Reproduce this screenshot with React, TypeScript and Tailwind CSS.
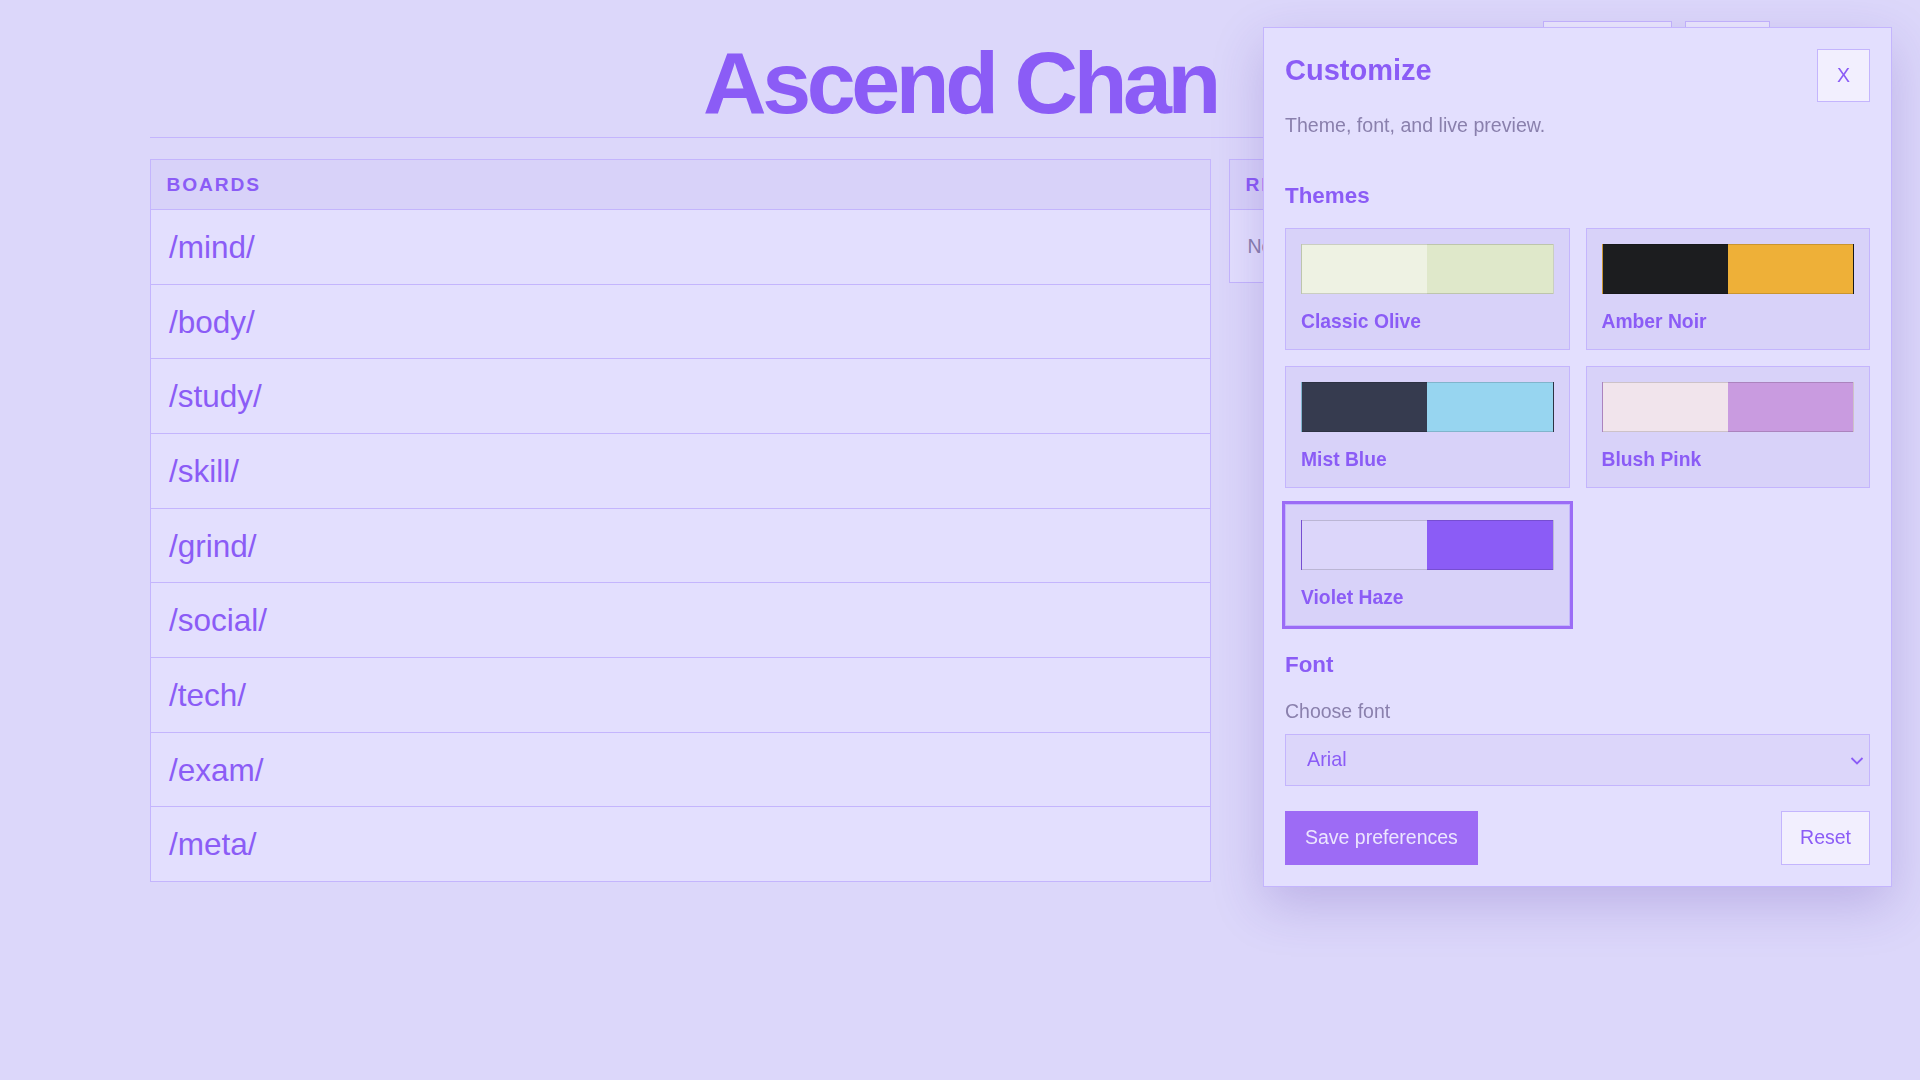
import React, { useState } from 'react';

const BOARDS = ['mind', 'body', 'study', 'skill', 'grind', 'social', 'tech', 'exam', 'meta'];

// swatch background repeats under the translucent border, like the original
const THEMES = [
  { id: 'olive', name: 'Classic Olive', swatch: 'bg-[linear-gradient(90deg,#eef2e3_50%,#dfe8ca_50%)]' },
  { id: 'amber', name: 'Amber Noir', swatch: 'bg-[linear-gradient(90deg,#1c1d1f_50%,#eeb038_50%)]' },
  { id: 'mist', name: 'Mist Blue', swatch: 'bg-[linear-gradient(90deg,#363b4f_50%,#97d5f0_50%)]' },
  { id: 'blush', name: 'Blush Pink', swatch: 'bg-[linear-gradient(90deg,#f1e4ec_50%,#c99be0_50%)]' },
  { id: 'violet', name: 'Violet Haze', swatch: 'bg-[linear-gradient(90deg,#dcd6fa_50%,#8b5cf6_50%)]' },
];

export default function App() {
  const [theme, setTheme] = useState('violet');
  const [font, setFont] = useState('Arial');

  return (
    <div className="min-h-screen bg-[#dcd7fa] text-[#8b5cf6] font-['Liberation_Sans',Arial,sans-serif]">
      <div className="w-[1620px] mx-auto">
        {/* Header */}
        <header className="relative pt-[32px] pb-[4px] border-b border-[#c4b5fd]">
          <h1 className="text-center text-[88px] leading-[101px] font-bold tracking-[-0.05em] text-[#8b5cf6]">
            Ascend Chan
          </h1>
          <nav className="absolute top-[21px] right-0 flex gap-[13px]">
            <button className="w-[129px] h-[48px] bg-[#ece8fe] border border-[#c4b5fd] text-[19.5px]">Customize</button>
            <button className="w-[85px] h-[48px] bg-[#ece8fe] border border-[#c4b5fd] text-[19.5px]">Login</button>
          </nav>
        </header>

        <div className="mt-[21px] grid grid-cols-[1061px_1fr] gap-[18px] items-start">
          {/* Boards */}
          <section className="border border-[#c4b5fd] bg-[#e3dffe]">
            <h2 className="bg-[#d8d2f9] px-[15.4px] pt-[10.8px] pb-[9.4px] leading-[28.8px] text-[19.2px] font-bold tracking-widest uppercase">
              Boards
            </h2>
            {BOARDS.map((b) => (
              <a
                key={b}
                href="#"
                className="block border-t border-[#c4b5fd] pl-[18px] py-[13.85px] leading-[46px] text-[31.5px] text-[#8b5cf6]"
              >
                /{b}/
              </a>
            ))}
          </section>

          {/* Recent */}
          <section className="border border-[#c4b5fd] bg-[#e3dffe]">
            <h2 className="bg-[#d8d2f9] px-[15.4px] pt-[10.8px] pb-[9.4px] leading-[28.8px] text-[19.2px] font-bold tracking-widest uppercase">
              Recent
            </h2>
            <p className="border-t border-[#c4b5fd] px-[17.5px] py-[21.6px] leading-[28.8px] text-[19.5px] text-[#8a80ad]">
              No threads yet.
            </p>
          </section>
        </div>
      </div>

      {/* Customize panel */}
      <aside className="fixed top-[27px] right-[28px] w-[629px] bg-[#e3dffe] border border-[#c4b5fd] p-[21px] shadow-[0_18px_48px_rgba(76,45,170,0.22)]">
        <div className="flex justify-between items-start">
          <div>
            <h2 className="text-[29px] leading-[42px] font-bold">Customize</h2>
            <p className="mt-[20px] text-[19.6px] leading-[28.8px] text-[#8a80ad]">Theme, font, and live preview.</p>
          </div>
          <button className="h-[53px] w-[53px] bg-[#f2effe] border border-[#c4b5fd] text-[19.6px] text-[#8b5cf6]">
            X
          </button>
        </div>

        <h3 className="mt-[39.4px] text-[22.4px] leading-[33.6px] font-bold">Themes</h3>
        <div className="mt-[15.3px] grid grid-cols-2 gap-[16px]">
          {THEMES.map((t) => (
            <button
              key={t.id}
              onClick={() => setTheme(t.id)}
              className={`text-left bg-[#d8d2f9] border border-[#c4b5fd] p-[15px] ${
                theme === t.id ? 'outline-[3px] outline-solid outline-[#9b6cf6]' : ''
              }`}
            >
              <div className={`h-[50px] border border-black/15 ${t.swatch}`} />
              <div className="mt-[16px] text-[19.3px] leading-[24px] font-bold text-[#8b5cf6]">{t.name}</div>
            </button>
          ))}
        </div>

        <h3 className="mt-[22.4px] text-[22.4px] leading-[33.6px] font-bold">Font</h3>
        <label className="mt-[15px] block text-[19.5px] leading-[28.8px] text-[#8a80ad]">Choose font</label>
        <div className="relative mt-[8px]">
          <select
            value={font}
            onChange={(e) => setFont(e.target.value)}
            className="w-full h-[52.4px] appearance-none bg-[#dcd6fa] border border-[#c4b5fd] pl-[21px] text-[19.8px] text-[#8b5cf6] outline-none"
          >
            <option>Arial</option>
            <option>Inter</option>
            <option>Roboto</option>
            <option>Lato</option>
          </select>
          <svg
            className="absolute right-[6px] top-[22px] pointer-events-none"
            width="14"
            height="10"
            viewBox="0 0 14 10"
            fill="none"
            stroke="#8b5cf6"
            strokeWidth="1.8"
          >
            <path d="M1.5 2 L7 7.5 L12.5 2" />
          </svg>
        </div>

        <div className="mt-[24.3px] flex justify-between">
          <button className="h-[54px] px-[19px] bg-[#9d6bf5] border border-[#9d6bf5] text-[19.5px] text-[#ece6fe]">
            Save preferences
          </button>
          <button className="h-[54px] px-[18px] bg-[#f2effe] border border-[#c4b5fd] text-[19.5px] text-[#8b5cf6]">
            Reset
          </button>
        </div>
      </aside>
    </div>
  );
}
